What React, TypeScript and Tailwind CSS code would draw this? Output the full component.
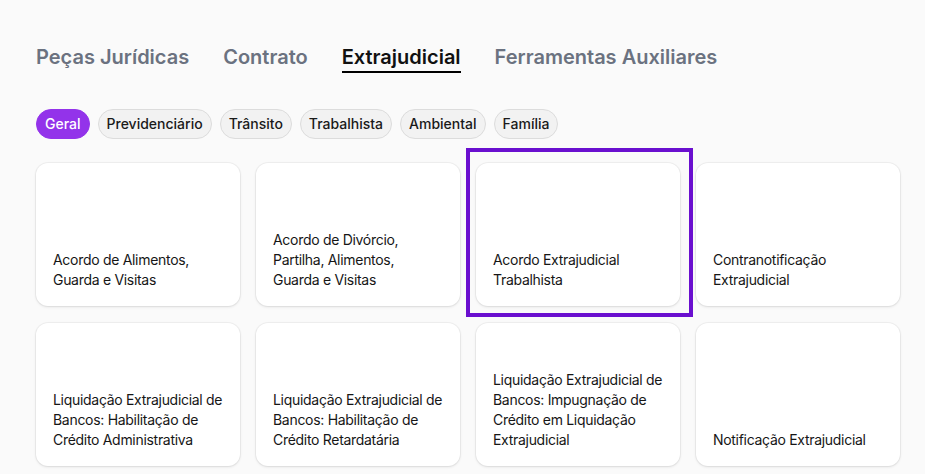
import { useState } from 'react'

const tabs = ['Peças Jurídicas', 'Contrato', 'Extrajudicial', 'Ferramentas Auxiliares']
const filters = ['Geral', 'Previdenciário', 'Trânsito', 'Trabalhista', 'Ambiental', 'Família']

const docs = [
  'Acordo de Alimentos, Guarda e Visitas',
  'Acordo de Divórcio, Partilha, Alimentos, Guarda e Visitas',
  'Acordo Extrajudicial Trabalhista',
  'Contranotificação Extrajudicial',
  'Liquidação Extrajudicial de Bancos: Habilitação de Crédito Administrativa',
  'Liquidação Extrajudicial de Bancos: Habilitação de Crédito Retardatária',
  'Liquidação Extrajudicial de Bancos: Impugnação de Crédito em Liquidação Extrajudicial',
  'Notificação Extrajudicial',
]

export default function App() {
  const [tab, setTab] = useState('Extrajudicial')
  const [filter, setFilter] = useState('Geral')

  return (
    <div className="min-h-screen bg-[#fafafa] px-[36px] pt-[43px] font-['Inter',sans-serif]">
      <div className="flex items-start gap-[34px]">
        {tabs.map((t) => (
          <button
            key={t}
            onClick={() => setTab(t)}
            className={
              t === tab
                ? 'border-b-2 border-black text-[20px] leading-[28px] font-semibold text-[#111]'
                : 'border-b-2 border-transparent text-[20px] leading-[28px] font-semibold text-[#6b7280]'
            }
          >
            {t}
          </button>
        ))}
      </div>

      <div className="mt-[36px] flex gap-2">
        {filters.map((f) => (
          <button
            key={f}
            onClick={() => setFilter(f)}
            className={
              f === filter
                ? 'rounded-full border border-[#9333ea] bg-[#9333ea] px-[8px] py-[4px] text-sm leading-5 font-medium text-white'
                : 'rounded-full border border-[#dcdcdc] bg-[#f2f2f2] px-[8px] py-[4px] text-sm leading-5 font-medium text-[#1a1a1a]'
            }
          >
            {f}
          </button>
        ))}
      </div>

      <div className="mt-[24px] grid w-[864px] grid-cols-4 gap-x-4 gap-y-[17px]">
        {docs.map((d, i) => (
          <div key={d} className="relative">
            <div className="flex h-[143px] items-end rounded-xl bg-white pr-[16px] pb-[16px] pl-[17px] shadow-[0_0_0_1px_rgba(0,0,0,0.04),0_1px_3px_rgba(0,0,0,0.1)]">
              <p className="text-sm leading-5 tracking-[-0.3px] text-[#161616]">{d}</p>
            </div>
            {i === 2 && (
              <div className="pointer-events-none absolute -top-[15px] -left-[10px] -right-[13px] -bottom-[11px] border-4 border-[#6a0fcf]" />
            )}
          </div>
        ))}
      </div>
    </div>
  )
}
